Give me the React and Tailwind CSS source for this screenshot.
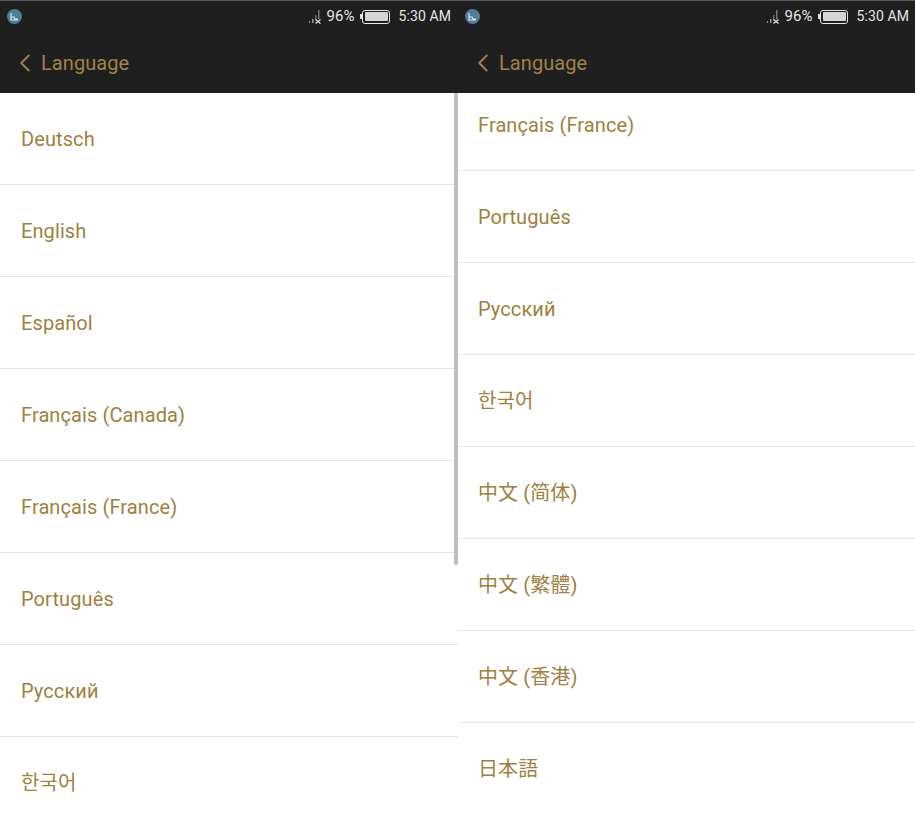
import { ChevronLeft } from "lucide-react";

const leftItems = ["Deutsch", "English", "Español", "Français (Canada)", "Français (France)", "Português", "Русский", "한국어"];
const rightItems = ["Français (France)", "Português", "Русский", "한국어", "中文 (简体)", "中文 (繁體)", "中文 (香港)", "日本語"];

function SignalIcon() {
  return (
    <svg width="14" height="16" viewBox="0 0 14 16" className="mr-[4px]">
      <rect x="0" y="12" width="1" height="2" fill="#888" />
      <rect x="3" y="10" width="1.5" height="4" fill="#999" />
      <rect x="6" y="6" width="1.5" height="5" fill="#666" />
      <rect x="9" y="1" width="1.5" height="9" fill="#777" />
      <path d="M6.5 10.5l5 4M11.5 10.5l-5 4" stroke="#e5e5e5" strokeWidth="1.2" />
    </svg>
  );
}

function BatteryIcon() {
  return (
    <div className="flex items-center">
      <div className="w-[2px] h-[5px] bg-[#ddd]" />
      <div className="w-[28px] h-[14px] border border-[#e8e8e8] rounded-[3px] p-[1.5px]">
        <div className="w-full h-full bg-[#d6d6d6] rounded-[1px]" />
      </div>
    </div>
  );
}

function AppBadge() {
  return (
    <div className="w-[15px] h-[15px] rounded-full bg-[#4f7c96] flex items-center justify-center">
      <svg width="9" height="9" viewBox="0 0 9 9">
        <path d="M1 1v7h7M1 5h3l1 2h3" stroke="#dbe6ec" strokeWidth="1.2" fill="none" />
      </svg>
    </div>
  );
}

function Panel({ items, offset, scrollbar, width, statusPad, itemPad }) {
  return (
    <div className={`${width} h-[813px] flex flex-col relative overflow-hidden`}>
      <header className="h-[93px] shrink-0 bg-[#1f1f1f] border-t border-[#5a5a5a]">
        <div className={`h-[31px] flex items-center justify-between pl-[7px] ${statusPad}`}>
          <AppBadge />
          <div className="flex items-center text-[#e6e6e6] text-[15px]">
            <SignalIcon />
            <span>96%</span>
            <div className="ml-[6px] mr-[8px]">
              <BatteryIcon />
            </div>
            <span className="text-[14px] tracking-[0.1px]">5:30 AM</span>
          </div>
        </div>
        <div className="h-[61px] flex items-center pl-[10px] text-[#a0834a] text-[20px] tracking-[0.08px]">
          <ChevronLeft size={30} strokeWidth={1.5} />
          <span className="ml-[1px]">Language</span>
        </div>
      </header>
      <div className="flex-1 overflow-hidden bg-white">
        <ul className={offset}>
          {items.map((item) => (
            <li key={item} className={`h-[92px] flex items-center ${itemPad} text-[20px] tracking-[0.1px] text-[#a0803f] border-b border-[#e6e6e6]`}>
              {item}
            </li>
          ))}
        </ul>
      </div>
      {scrollbar && <div className="absolute right-0 top-[93px] w-[4px] h-[472px] bg-[#bdbdbd] rounded-b-[2px]" />}
    </div>
  );
}

export default function App() {
  return (
    <div className="w-[915px] h-[813px] flex overflow-hidden bg-white font-['Roboto','Noto_Sans_CJK_KR','Noto_Sans_CJK_SC',sans-serif]">
      <Panel items={leftItems} offset="" scrollbar width="w-[458px]" statusPad="pr-[7px]" itemPad="pl-[21px]" />
      <Panel items={rightItems} offset="-mt-[14px]" width="w-[457px]" statusPad="pr-[6px]" itemPad="pl-[20px]" />
    </div>
  );
}
